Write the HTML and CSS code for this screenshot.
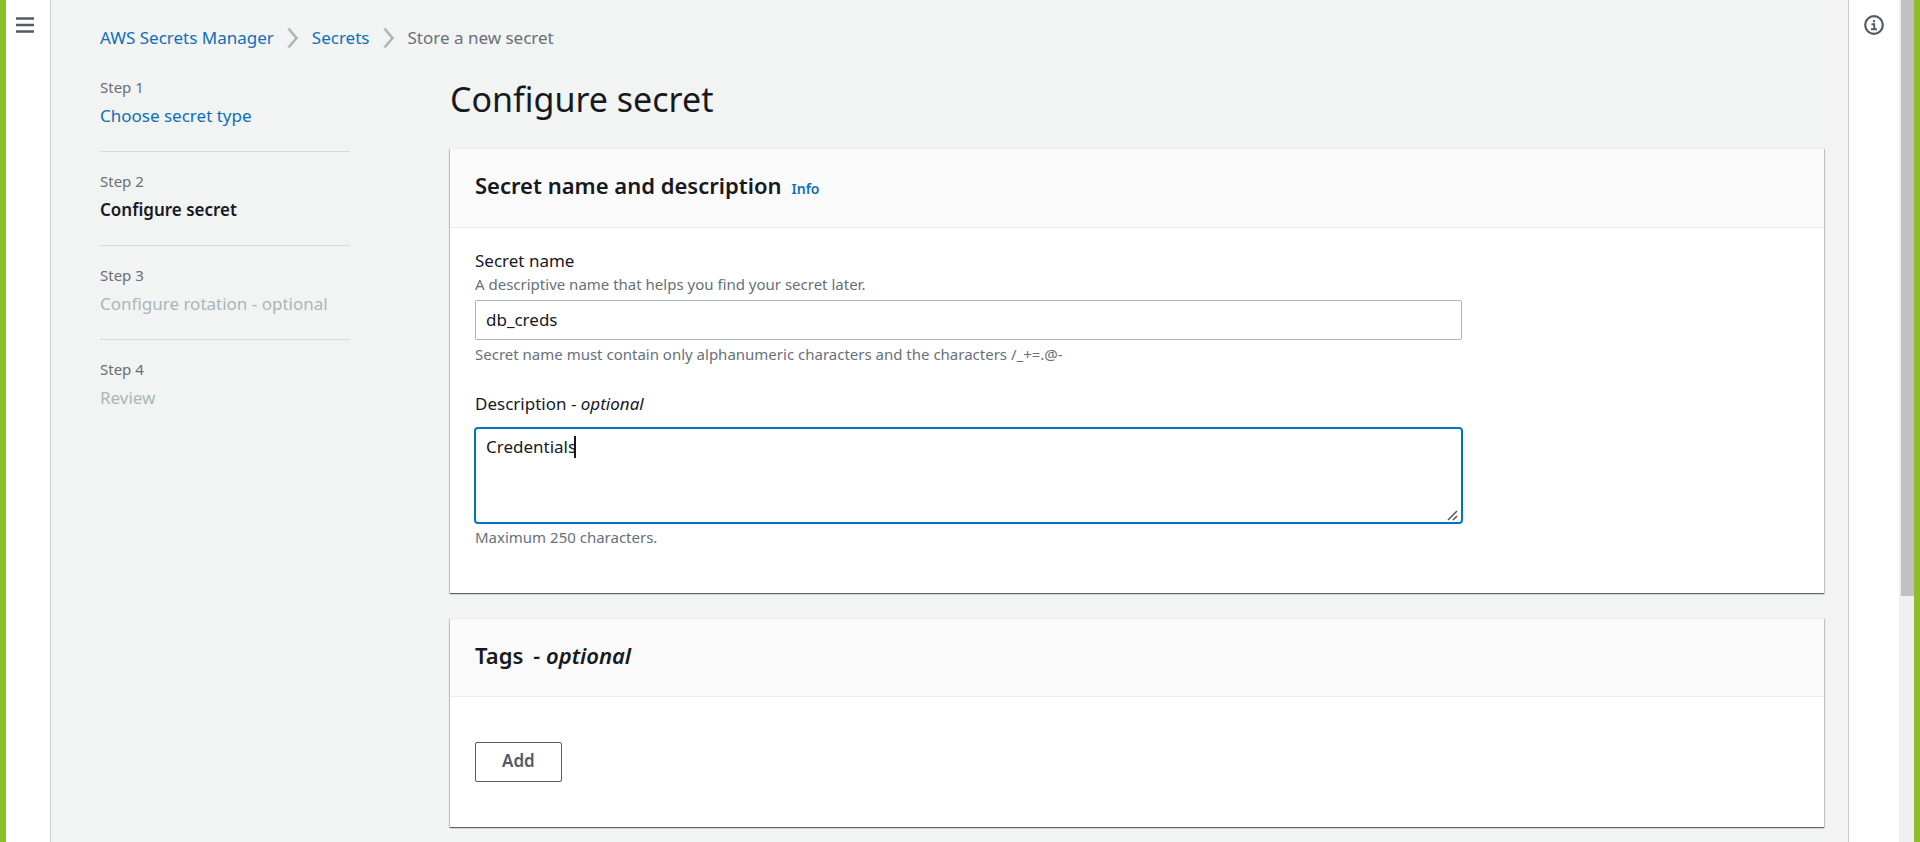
FILE: index.html
```html
<!DOCTYPE html>
<html lang="en">
<head>
<meta charset="utf-8">
<title>Store a new secret</title>
<link rel="stylesheet" href="styles.css">
</head>
<body>
<div class="app">
  <aside class="rail rail-left">
    <button class="icon-button" type="button" aria-label="Open navigation">
      <svg class="menu-icon" width="18" height="18" viewBox="0 0 18 18" fill="none" stroke="currentColor" stroke-width="2.5"><path d="M0 2.500h18M0 9h18M0 15.500h18"/></svg>
    </button>
  </aside>
  <div class="page">
    <nav class="breadcrumbs" aria-label="Breadcrumbs">
      <a href="#">AWS Secrets Manager</a>
      <svg class="chevron" width="12" height="22" viewBox="0 0 12 22" fill="none" stroke="currentColor" stroke-width="2.500"><path d="M1.500 1.500 9.500 11 1.500 20.500"/></svg>
      <a href="#">Secrets</a>
      <svg class="chevron" width="12" height="22" viewBox="0 0 12 22" fill="none" stroke="currentColor" stroke-width="2.500"><path d="M1.500 1.500 9.500 11 1.500 20.500"/></svg>
      <span>Store a new secret</span>
    </nav>
    <div class="columns">
      <ol class="steps">
        <li class="step"><small>Step 1</small><a href="#">Choose secret type</a></li>
        <li class="step step-current"><small>Step 2</small><span>Configure secret</span></li>
        <li class="step step-disabled"><small>Step 3</small><span>Configure rotation - optional</span></li>
        <li class="step step-disabled"><small>Step 4</small><span>Review</span></li>
      </ol>
      <main class="content">
        <h1>Configure secret</h1>
        <section class="card">
          <header class="card-header"><h2>Secret name and description</h2><a class="info" href="#">Info</a></header>
          <div class="card-body">
            <div class="field">
              <label for="name">Secret name</label>
              <p class="hint">A descriptive name that helps you find your secret later.</p>
              <input id="name" class="control" type="text" value="db_creds">
              <p class="hint hint-below">Secret name must contain only alphanumeric characters and the characters /_+=.@-</p>
            </div>
            <div class="field field-description">
              <label for="description">Description - <em>optional</em></label>
              <div class="textarea-wrap">
                <textarea id="description" class="control control-active">Credentials</textarea>
                <span class="caret"></span>
                <svg class="grip" width="14" height="14" viewBox="0 0 14 14" fill="none" stroke="currentColor" stroke-width="1.500"><path d="M2 12 11 3M7 12l4-4"/></svg>
              </div>
              <p class="hint hint-below">Maximum 250 characters.</p>
            </div>
          </div>
        </section>
        <section class="card">
          <header class="card-header"><h2>Tags</h2><h2><em>- optional</em></h2></header>
          <div class="card-body card-body-tags">
            <button class="button" type="button">Add</button>
          </div>
        </section>
      </main>
    </div>
  </div>
  <aside class="rail rail-right">
    <button class="icon-button" type="button" aria-label="Open help">
      <svg width="20" height="20" viewBox="0 0 20 20" fill="none" stroke="currentColor"><circle cx="10" cy="10" r="8.800" stroke-width="2.200"/><path d="M10 5v2.300M7.500 9.200h2.700v5M7 14.200h6" stroke-width="2"/></svg>
    </button>
  </aside>
  <div class="scroll-track"><div class="scroll-thumb"></div></div>
</div>
</body>
</html>
```
FILE: styles.css
```css
* { box-sizing: border-box; }
body {
  margin: 0;
  font: 17px/24px "Noto Sans", "Open Sans", sans-serif;
  color: #16191f;
  background: #f2f3f3;
  overflow: hidden;
}
h1, h2, p, ol { margin: 0; padding: 0; font-weight: 400; }
a { color: #0f6fb8; text-decoration: none; }
.app {
  display: flex;
  height: 100vh;
  border: solid #8bbe27;
  border-width: 0 6px;
}
.rail {
  flex: none;
  display: flex;
  align-items: flex-start;
  padding-top: 15px;
  background: #fff;
}
.rail-left { width: 45px; padding-left: 10px; border-right: 1px solid #c5cccc; }
.rail-right { width: 51px; padding-left: 15px; border-left: 1px solid #c5cccc; }
.icon-button { display: flex; padding: 0; border: 0; background: none; color: #545b64; }
.menu-icon { margin-top: 1px; }
.scroll-track { flex: none; width: 15px; padding-left: 2px; background: #f0f0f0; }
.scroll-thumb { height: 70.8%; background: #c1c1c1; }
.page { flex: 1; min-width: 0; padding: 26px 24px 0 49px; overflow: hidden; }
.breadcrumbs { display: flex; align-items: center; gap: 13px; color: #687078; }
.chevron { color: #aab7b8; }
.columns { display: flex; gap: 100px; padding-top: 26px; }
.steps { flex: none; width: 250px; list-style: none; }
.step {
  display: flex;
  flex-direction: column;
  gap: 6px;
  padding-bottom: 23px;
}
.step + .step { padding-top: 18px; border-top: 1px solid #d5dbdb; }
.step small, .hint { font-size: 15px; line-height: 22px; color: #687078; }
.step-current span { font-weight: 600; }
.step-disabled span { color: #aab7b8; }
.content { flex: 1; min-width: 0; display: flex; flex-direction: column; gap: 25px; }
h1 { font-size: 34px; line-height: 47px; }
.card {
  background: #fff;
  border-top: 1px solid #eaeded;
  box-shadow: 0 1px 1px 0 rgba(0, 28, 36, 0.5), 1px 1px 1px 0 rgba(0, 28, 36, 0.15), -1px 1px 1px 0 rgba(0, 28, 36, 0.15);
}
.card-header {
  display: flex;
  align-items: baseline;
  gap: 10px;
  padding: 21px 25px 26px;
  background: #fafafa;
  border-bottom: 1px solid #eaeded;
}
h2 { font-size: 22px; line-height: 30px; font-weight: 600; }
.info { font-size: 14px; font-weight: 600; }
.card-body { padding: 21px 25px 45px; }
.card-body-tags { padding: 45px 25px; }
.field { width: 75%; padding-right: 6px; }
.field label { display: block; }
.field-description { padding-top: 27px; }
.control {
  display: block;
  width: 100%;
  height: 40px;
  padding: 6px 10px 8px;
  font: inherit;
  color: inherit;
  background: #fff;
  border: 1px solid #aab7b8;
  border-radius: 2px;
}
.hint + .control { margin-top: 5px; }
.hint-below { padding-top: 3px; }
.textarea-wrap { position: relative; margin-top: 12px; }
textarea.control { height: 95px; }
.control-active { border-color: #0073bb; box-shadow: 0 0 0 1px #0073bb; border-radius: 3px; }
.caret { position: absolute; left: 99px; top: 8px; width: 2px; height: 22px; background: #16191f; }
.grip { position: absolute; right: 2px; bottom: 1px; background: #fff; color: #545454; pointer-events: none; }
.button {
  display: block;
  height: 40px;
  padding: 0 26px 2px;
  font: inherit;
  font-weight: 600;
  color: #545b64;
  background: #fff;
  border: 1px solid #545b64;
  border-radius: 2px;
}
```
